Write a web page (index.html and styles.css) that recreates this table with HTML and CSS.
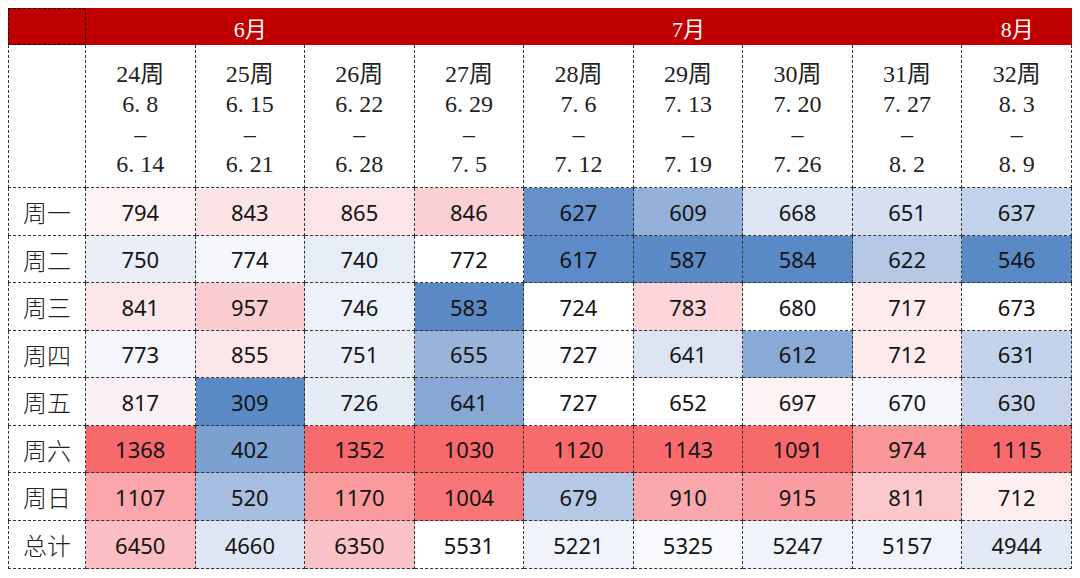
FILE: index.html
```html
<!DOCTYPE html>
<html lang="zh-CN">
<head>
<meta charset="utf-8">
<title>周度数据</title>
<link rel="stylesheet" href="styles.css">
</head>
<body>
<table class="heat">
  <colgroup>
    <col class="c-label">
    <col><col><col><col><col><col><col><col><col>
  </colgroup>
  <tr class="r-month">
    <td class="corner"></td>
    <td class="month" colspan="3">6月</td>
    <td class="month" colspan="5">7月</td>
    <td class="month">8月</td>
  </tr>
  <tr class="r-week">
    <td class="label"></td>
    <td class="week"><div>24周</div><div>6<span class="p">.</span>8</div><div>–</div><div>6<span class="p">.</span>14</div></td>
    <td class="week"><div>25周</div><div>6<span class="p">.</span>15</div><div>–</div><div>6<span class="p">.</span>21</div></td>
    <td class="week"><div>26周</div><div>6<span class="p">.</span>22</div><div>–</div><div>6<span class="p">.</span>28</div></td>
    <td class="week"><div>27周</div><div>6<span class="p">.</span>29</div><div>–</div><div>7<span class="p">.</span>5</div></td>
    <td class="week"><div>28周</div><div>7<span class="p">.</span>6</div><div>–</div><div>7<span class="p">.</span>12</div></td>
    <td class="week"><div>29周</div><div>7<span class="p">.</span>13</div><div>–</div><div>7<span class="p">.</span>19</div></td>
    <td class="week"><div>30周</div><div>7<span class="p">.</span>20</div><div>–</div><div>7<span class="p">.</span>26</div></td>
    <td class="week"><div>31周</div><div>7<span class="p">.</span>27</div><div>–</div><div>8<span class="p">.</span>2</div></td>
    <td class="week"><div>32周</div><div>8<span class="p">.</span>3</div><div>–</div><div>8<span class="p">.</span>9</div></td>
  </tr>
  <tr class="r-a">
    <td class="label">周一</td>
    <td class="num" style="background:#fdf3f5">794</td>
    <td class="num" style="background:#fce3e6">843</td>
    <td class="num" style="background:#fce4e7">865</td>
    <td class="num" style="background:#fad0d4">846</td>
    <td class="num" style="background:#6690ca">627</td>
    <td class="num" style="background:#94b1da">609</td>
    <td class="num" style="background:#dde5f3">668</td>
    <td class="num" style="background:#d6e0f0">651</td>
    <td class="num" style="background:#c2d2ea">637</td>
  </tr>
  <tr class="r-b">
    <td class="label">周二</td>
    <td class="num" style="background:#e9eef7">750</td>
    <td class="num" style="background:#f6f7fc">774</td>
    <td class="num" style="background:#e7edf7">740</td>
    <td class="num" style="background:#ffffff">772</td>
    <td class="num" style="background:#5d8bc7">617</td>
    <td class="num" style="background:#5b8ac6">587</td>
    <td class="num" style="background:#5a8ac6">584</td>
    <td class="num" style="background:#b5c8e6">622</td>
    <td class="num" style="background:#5a8ac6">546</td>
  </tr>
  <tr class="r-a">
    <td class="label">周三</td>
    <td class="num" style="background:#fce6e9">841</td>
    <td class="num" style="background:#facdd1">957</td>
    <td class="num" style="background:#edf1f9">746</td>
    <td class="num" style="background:#5a89c6">583</td>
    <td class="num" style="background:#ffffff">724</td>
    <td class="num" style="background:#fbd5d9">783</td>
    <td class="num" style="background:#ffffff">680</td>
    <td class="num" style="background:#fdebee">717</td>
    <td class="num" style="background:#ffffff">673</td>
  </tr>
  <tr class="r-b">
    <td class="label">周四</td>
    <td class="num" style="background:#f4f6fb">773</td>
    <td class="num" style="background:#fce6e9">855</td>
    <td class="num" style="background:#e9eef7">751</td>
    <td class="num" style="background:#98b4db">655</td>
    <td class="num" style="background:#fcfcfe">727</td>
    <td class="num" style="background:#dce4f2">641</td>
    <td class="num" style="background:#89a9d6">612</td>
    <td class="num" style="background:#fdeaed">712</td>
    <td class="num" style="background:#c3d3eb">631</td>
  </tr>
  <tr class="r-a">
    <td class="label">周五</td>
    <td class="num" style="background:#fbf1f4">817</td>
    <td class="num" style="background:#5a8ac6">309</td>
    <td class="num" style="background:#e6ecf6">726</td>
    <td class="num" style="background:#87a7d5">641</td>
    <td class="num" style="background:#ffffff">727</td>
    <td class="num" style="background:#ffffff">652</td>
    <td class="num" style="background:#fdf2f4">697</td>
    <td class="num" style="background:#f6f7fc">670</td>
    <td class="num" style="background:#c5d4eb">630</td>
  </tr>
  <tr class="r-b">
    <td class="label">周六</td>
    <td class="num" style="background:#f8696b">1368</td>
    <td class="num" style="background:#7ba0d2">402</td>
    <td class="num" style="background:#f86b6d">1352</td>
    <td class="num" style="background:#f8696b">1030</td>
    <td class="num" style="background:#f86b6d">1120</td>
    <td class="num" style="background:#f86c6e">1143</td>
    <td class="num" style="background:#f8696b">1091</td>
    <td class="num" style="background:#f99699">974</td>
    <td class="num" style="background:#f86b6d">1115</td>
  </tr>
  <tr class="r-a">
    <td class="label">周日</td>
    <td class="num" style="background:#faa6aa">1107</td>
    <td class="num" style="background:#a6bee1">520</td>
    <td class="num" style="background:#f99a9d">1170</td>
    <td class="num" style="background:#f87578">1004</td>
    <td class="num" style="background:#b5c8e6">679</td>
    <td class="num" style="background:#faa8ab">910</td>
    <td class="num" style="background:#f99da0">915</td>
    <td class="num" style="background:#fbc8cc">811</td>
    <td class="num" style="background:#fdeef0">712</td>
  </tr>
  <tr class="r-last">
    <td class="label">总计</td>
    <td class="num" style="background:#fbbec2">6450</td>
    <td class="num" style="background:#dfe6f3">4660</td>
    <td class="num" style="background:#fbc3c7">6350</td>
    <td class="num" style="background:#ffffff">5531</td>
    <td class="num" style="background:#f0f3fa">5221</td>
    <td class="num" style="background:#f9fafd">5325</td>
    <td class="num" style="background:#f0f3fa">5247</td>
    <td class="num" style="background:#f1f4fa">5157</td>
    <td class="num" style="background:#e3e9f5">4944</td>
  </tr>
</table>
</body>
</html>
```

FILE: styles.css
```css
html, body {
  margin: 0;
  padding: 0;
  background: #ffffff;
}

body {
  padding: 8px;
}

.heat {
  width: 1064px;
  table-layout: fixed;
  border-collapse: separate;
  border-spacing: 0;
  color: #141414;
}

.c-label {
  width: 78px;
}

.heat td {
  padding: 0;
  text-align: center;
  border-right: 1px dashed #333333;
  border-bottom: 1px dashed #333333;
}

.heat td.label {
  border-left: 1px dashed #333333;
  font-family: "Noto Sans CJK SC", sans-serif;
  font-weight: 300;
  font-size: 24px;
  color: #222222;
  vertical-align: middle;
}

.r-month {
  height: 37px;
}

.heat td.corner {
  background: #c00000;
  border: 1px dashed #111111;
}

.heat td.month {
  background: #c00000;
  border: none;
  color: #ffffff;
  font-family: "Liberation Serif", "Noto Sans CJK SC", serif;
  font-size: 22px;
  vertical-align: middle;
}

.r-week {
  height: 143px;
}

.heat td.week {
  vertical-align: top;
  padding-top: 14px;
  font-family: "Liberation Serif", "Noto Sans CJK SC", serif;
  font-size: 24px;
  line-height: 30px;
  color: #222222;
}

.p {
  margin-right: 6px;
}

.r-a {
  height: 48px;
}

.r-b {
  height: 47px;
}

.r-last {
  height: 48px;
}

.heat td.num {
  font-family: "Noto Sans", "Open Sans", sans-serif;
  font-size: 22px;
  vertical-align: middle;
}
```
